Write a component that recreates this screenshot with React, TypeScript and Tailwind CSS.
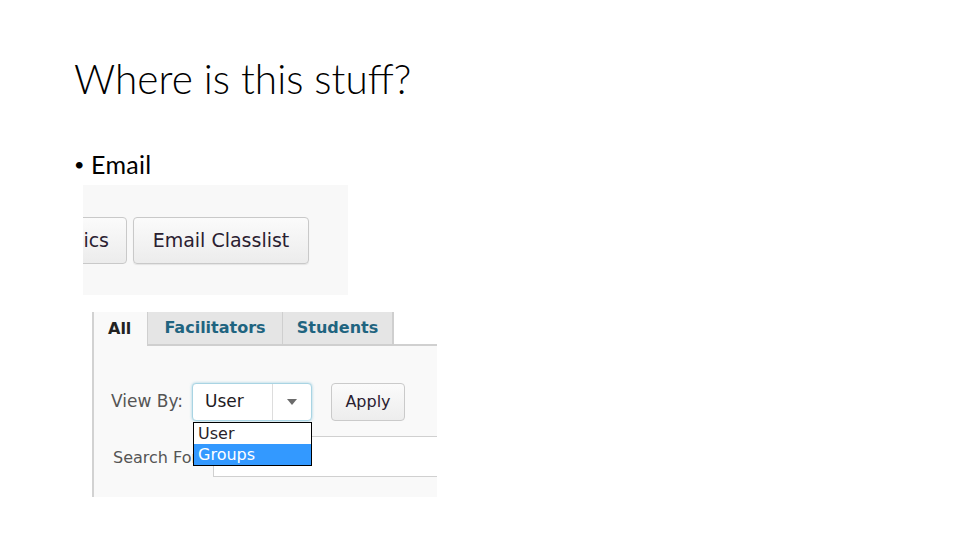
import React from "react";

const verdana = { fontFamily: '"DejaVu Sans", Verdana, sans-serif' };

export default function App() {
  return (
    <div className="w-[960px] h-[540px] bg-white overflow-hidden relative" style={{ fontFamily: 'Lato, "Open Sans", sans-serif' }}>
      <div className="pl-[74px] pt-[55px]">
        <h1 className="text-[40.5px] font-light leading-[48px] text-black">Where is this stuff?</h1>
        <div className="mt-[46px] flex items-center text-[25px] leading-[30px] text-black">
          <span className="w-[17px] text-[18px]">•</span>
          <span className="font-normal tracking-[0.3px]">Email</span>
        </div>
      </div>

      {/* Screenshot 1 */}
      <div className="ml-[83px] mt-[6px] w-[265px] h-[110px] bg-[#f8f8f8] overflow-hidden flex items-start pt-[32px] gap-[6px]" style={verdana}>
        <div className="shrink-0 w-[44px] h-[47px] overflow-hidden flex justify-end">
          <div className="shrink-0 w-[90px] h-[47px] rounded-[4px] border border-[#c9c9c9] bg-gradient-to-b from-[#fbfbfb] to-[#ececec] flex items-center justify-end pr-[17px] text-[19px] text-[#2a2030]">
            ics
          </div>
        </div>
        <div className="shrink-0 w-[176px] h-[47px] rounded-[4px] border border-[#c9c9c9] bg-gradient-to-b from-[#fbfbfb] to-[#ececec] flex items-center justify-center text-[19px] text-[#2a2030] shadow-[0_1px_1px_rgba(0,0,0,0.08)]">
          Email Classlist
        </div>
      </div>

      {/* Screenshot 2 */}
      <div className="ml-[83px] mt-[17px] w-[354px] h-[185px] bg-white overflow-hidden pl-[9px]" style={verdana}>
        <div className="h-full border-l-2 border-[#d2d2d2] bg-[#f9f9f9] flex flex-col">
          <div className="flex h-[34px] shrink-0">
            <div className="w-[53px] flex items-center pl-[14px] text-[16px] font-bold text-[#222]">All</div>
            <div className="w-[136px] flex items-center justify-center bg-[#e5e5e5] border-l border-r border-b-2 border-[#cfcfcf] text-[16px] font-bold text-[#1f6480]">Facilitators</div>
            <div className="w-[111px] flex items-center justify-center bg-[#e5e5e5] border-r-2 border-b-2 border-[#cfcfcf] text-[16px] font-bold text-[#1f6480]">Students</div>
            <div className="flex-1 bg-white border-b-2 border-[#d0d0d0]"></div>
          </div>
          <div className="pl-[17px] pt-[37px] flex flex-col">
            <div className="flex items-center h-[38px]">
              <div className="w-[81px] shrink-0 text-[17px] text-[#555] whitespace-nowrap">View By:</div>
              <div className="relative w-[120px] h-[38px] shrink-0">
                <div className="w-full h-full rounded-[4px] border border-[#a9d4e3] bg-white shadow-[0_0_3px_rgba(120,190,215,0.7)] flex items-center">
                  <div className="flex-1 pl-[12px] text-[17px] text-[#1e1a22]">User</div>
                  <div className="w-[39px] h-full border-l border-[#dddddd] flex items-center justify-center">
                    <svg width="10" height="6" viewBox="0 0 10 6"><path d="M0 0 L10 0 L5 6 Z" fill="#6b6b6b" /></svg>
                  </div>
                </div>
                <div className="absolute left-[1px] top-[39px] w-[119px] border border-black bg-white z-10">
                  <div className="h-[21px] flex items-center pl-[4px] text-[16px] text-[#2a1f2a]">User</div>
                  <div className="h-[21px] flex items-center pl-[4px] text-[16px] text-white bg-[#3399ff]">Groups</div>
                </div>
              </div>
              <div className="ml-[19px] shrink-0 w-[74px] h-[38px] rounded-[4px] border border-[#cacaca] bg-gradient-to-b from-[#fbfbfb] to-[#ededed] flex items-center justify-center text-[16px] text-[#2a2030]">Apply</div>
            </div>
            <div className="flex mt-[15px] h-[41px]">
              <div className="w-[102px] shrink-0 pl-[2px] pt-[10px] text-[16px] text-[#555] whitespace-nowrap overflow-hidden">Search For:</div>
              <div className="w-[240px] shrink-0 h-[41px] border border-[#d0d0d0] bg-white"></div>
            </div>
          </div>
        </div>
      </div>
    </div>
  );
}
